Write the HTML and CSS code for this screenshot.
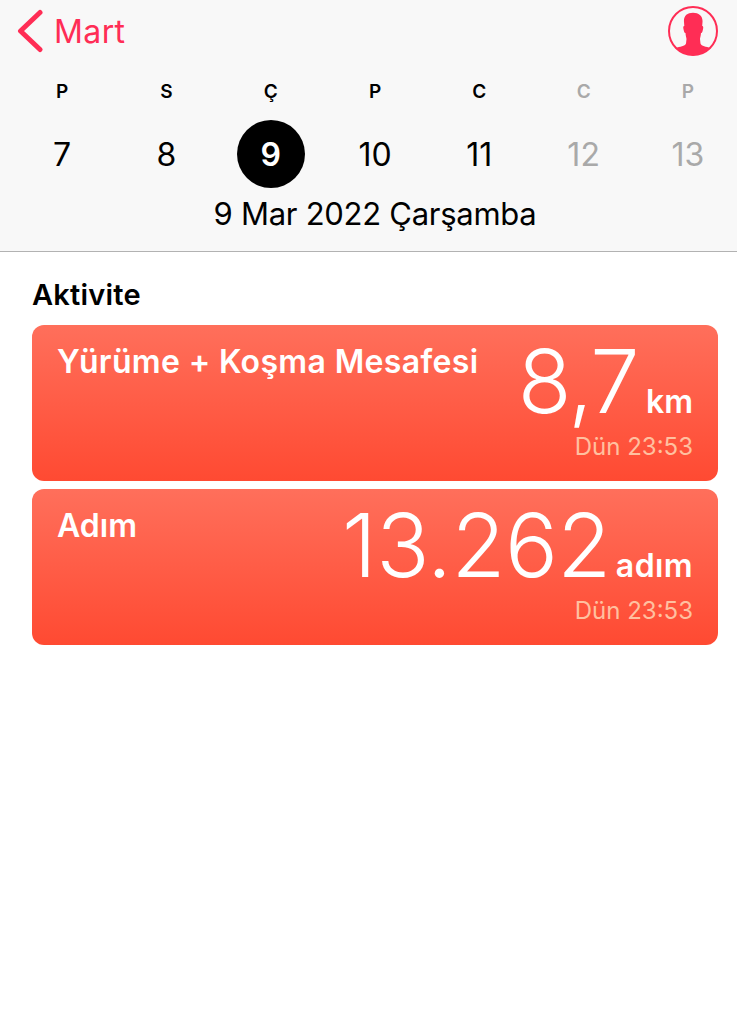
FILE: index.html
```html
<!DOCTYPE html>
<html lang="tr">
<head>
    <meta charset="UTF-8">
    <meta name="viewport" content="width=device-width, initial-scale=1.0">
    <title>Aktivite</title>
    <link rel="stylesheet" href="styles.css">
</head>
<body>
    <header>
        <div class="topbar">
            <a class="back" href="#">
                <svg width="26" height="44" viewBox="0 0 26 44">
                    <path d="M23 3.5 L3.5 22 L23 40.5" fill="none" stroke="#ff2d55" stroke-width="5" stroke-linecap="round" stroke-linejoin="round"/>
                </svg>
                <span>Mart</span>
            </a>
            <svg class="profile" width="50" height="50" viewBox="0 0 50 50">
                <circle cx="25" cy="25" r="24" fill="none" stroke="#ff2d55" stroke-width="2"/>
                <path d="M25 6.7 C19 6.7 15.5 10 16 16 L16.3 20 C15 20 15 22 15.8 24.5 C16.2 26.5 16.8 27 17.5 27 C17.7 30 18.3 31.5 18.5 33 L18 37.5 C17 40.5 12 40.5 7.5 42 C17 51.5 33 51.5 42.5 42 C38 40.5 33.5 40.5 32.5 37.5 L32 33 C32.2 31.5 32.8 30 33 27 C33.7 27 34.3 26.5 34.7 24.5 C35.5 22 35.5 20 34.2 20 L34.5 16 C35 10 31 6.7 25 6.7 Z" fill="#ff2d55"/>
            </svg>
        </div>
        <div class="week">
            <div class="day"><span class="name">P</span><span class="num">7</span></div>
            <div class="day"><span class="name">S</span><span class="num">8</span></div>
            <div class="day selected"><span class="name">Ç</span><span class="num">9</span></div>
            <div class="day"><span class="name">P</span><span class="num">10</span></div>
            <div class="day"><span class="name">C</span><span class="num">11</span></div>
            <div class="day future"><span class="name">C</span><span class="num">12</span></div>
            <div class="day future"><span class="name">P</span><span class="num">13</span></div>
        </div>
        <div class="date">9 Mar 2022 Çarşamba</div>
    </header>

    <section>
        <h2>Aktivite</h2>
        <div class="card distance">
            <h3>Yürüme + Koşma Mesafesi</h3>
            <div class="reading">
                <div class="amount"><span class="value">8,7</span><span class="unit">km</span></div>
                <div class="time">Dün 23:53</div>
            </div>
        </div>
        <div class="card steps">
            <h3>Adım</h3>
            <div class="reading">
                <div class="amount"><span class="value">13.262</span><span class="unit">adım</span></div>
                <div class="time">Dün 23:53</div>
            </div>
        </div>
    </section>
</body>
</html>
```
FILE: styles.css
```css
body {
    font-family: Inter, sans-serif;
    margin: 0;
    background-color: #fff;
    color: #000;
}

header {
    box-sizing: border-box;
    height: 252px;
    background-color: #f8f8f8;
    border-bottom: 1px solid #b2b2b2;
}

.topbar {
    display: flex;
    justify-content: space-between;
    height: 76px;
    padding: 0 19px 0 17px;
}

.back {
    display: flex;
    height: 62px;
    align-items: center;
    gap: 11px;
    color: #ff2d55;
    font-size: 32px;
    letter-spacing: 0.4px;
    text-decoration: none;
}

.profile {
    margin-top: 6px;
}

.week {
    display: grid;
    grid-template-columns: repeat(7, 104.3px);
    margin-left: 10px;
    height: 112px;
}

.day {
    display: flex;
    flex-direction: column;
    align-items: center;
}

.name {
    height: 44px;
    line-height: 31px;
    font-size: 19px;
    font-weight: 600;
}

.num {
    width: 68px;
    height: 68px;
    line-height: 69px;
    border-radius: 50%;
    font-size: 32px;
    text-align: center;
}

.selected .num {
    background-color: #000;
    color: #fff;
    font-weight: 600;
}

.future {
    color: #a9a9a9;
}

.date {
    margin-left: 13px;
    line-height: 51px;
    font-size: 31px;
    letter-spacing: -0.27px;
    text-align: center;
}

section {
    padding: 24px 19px 0 32px;
}

h2 {
    margin: 0;
    height: 49px;
    line-height: 38px;
    font-size: 29px;
    font-weight: 600;
    letter-spacing: 0.2px;
}

.card {
    box-sizing: border-box;
    display: flex;
    justify-content: space-between;
    height: 156px;
    margin-bottom: 8px;
    padding: 0 25px;
    border-radius: 12px;
    background: linear-gradient(#ff6f5b, #ff4a32);
    color: #fff;
}

h3 {
    margin: 17px 0 0;
    line-height: 40px;
    font-size: 32px;
    font-weight: 600;
    letter-spacing: 0.35px;
    white-space: nowrap;
}

.steps h3 {
    letter-spacing: 0;
}

.reading {
    text-align: right;
    white-space: nowrap;
}

.amount {
    height: 107px;
    line-height: 113px;
}

.value {
    font-size: 88px;
    font-weight: 300;
    letter-spacing: -0.5px;
}

.distance .value {
    letter-spacing: -1.5px;
}

.unit {
    margin-left: 8px;
    font-size: 32px;
    font-weight: 600;
}

.steps .unit {
    margin-left: 5px;
    letter-spacing: 0.4px;
}

.time {
    line-height: 30px;
    font-size: 24px;
    color: #ffc0a0;
}
```
